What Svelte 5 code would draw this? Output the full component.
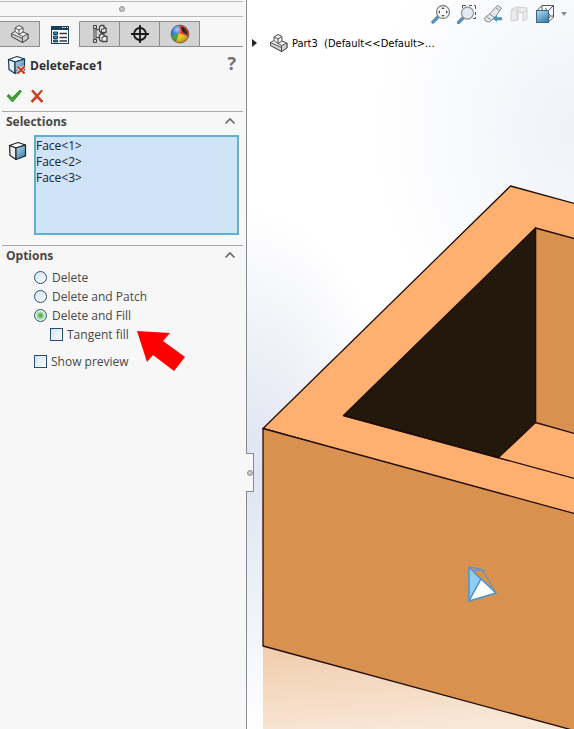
<script lang="ts">
let mode = $state("fill");
let tangentFill = $state(false);
let showPreview = $state(false);

const faces = ["Face<1>", "Face<2>", "Face<3>"];
const modes = [
	{ value: "delete", label: "Delete" },
	{ value: "patch", label: "Delete and Patch" },
	{ value: "fill", label: "Delete and Fill" },
];
</script>

{#snippet partIcon()}
    <svg width="20" height="20" viewBox="0 0 20 20" stroke="#505050" stroke-linejoin="round">
        <path d="M1.500 9.500 5 7.500V4l4-2.500L13 3.500V8l5 2v5l-5.500 3.500L1.500 12.500z" fill="#f4f4f4" />
        <path d="M1.500 9.500l11 5v4l-11-6zM12.500 12.500 18 10v5l-5.500 3.500z" fill="#cfcfcf" />
        <path d="M5 4l4 2 4-2.500M9 6v4.500l3.500 2M5 7.500l4 3L13 8" fill="none" />
    </svg>
{/snippet}

{#snippet chevron()}
    <svg width="12" height="8" viewBox="0 0 12 8">
        <path d="M1.500 6.500 6 2l4.500 4.500" fill="none" stroke="#686868" stroke-width="1.600" />
    </svg>
{/snippet}

{#snippet cube(stroke: string)}
    <svg width="20" height="20" viewBox="0 0 20 20" {stroke} stroke-width="1.200" stroke-linejoin="round">
        <defs>
            <linearGradient id="cube-face" x1="0" y1="0" x2=".6" y2="1">
                <stop offset="0" stop-color="#b5dcf2" />
                <stop offset="1" stop-color="#3e86b0" />
            </linearGradient>
        </defs>
        <path d="M1.500 4.500 10 1.500l7.500 2.500L8 7z" fill="#fff" />
        <path d="M1.500 4.500 8 7v11.500l-6-4z" fill="#e6ecf1" />
        <path d="M8 7l9.500-3v11L8 18.500z" fill="url(#cube-face)" />
        {#if stroke === "#173a50"}
            <path d="M10.500 11.500l7 7M17.500 11.500l-7 7" stroke="#fff" stroke-width="3.500" />
            <path d="M10.500 11.500l7 7M17.500 11.500l-7 7" stroke="#d33b22" stroke-width="2.400" />
        {/if}
    </svg>
{/snippet}

<main class="app">
    <aside class="panel">
        <div class="grip"><span class="dot"></span></div>

        <nav class="tabs">
            <button class="tab" aria-label="Feature tree">{@render partIcon()}</button>
            <button class="tab active" aria-label="Property manager">
                <svg width="20" height="20" viewBox="0 0 20 20">
                    <rect x="1.500" y="1.500" width="17" height="17" fill="#fff" stroke="#17405c" />
                    <path d="M1 1h18v4H1z" fill="#17405c" />
                    <path d="M12 2.500h1.500M14.500 2.500H16M17 2.500h1" stroke="#fff" />
                    <path d="M3.500 7h4v2.500h-4zM3.500 11h4v2.500h-4zM3.500 15h4v2h-4z" fill="#3a8cb8" stroke="#17405c" />
                    <path d="M9.500 8.500H17M9.500 12.500H17M9.500 16H17" stroke="#333" stroke-width="1.300" />
                </svg>
            </button>
            <button class="tab" aria-label="Configurations">
                <svg width="20" height="20" viewBox="0 0 20 20" fill="none" stroke="#444" stroke-linejoin="round">
                    <path d="M3.500 1.500h3v3h-3zM3.500 15.500h3v3h-3zM4 4.500v11M6 4.500v11M6 5.500h4M6 13.500h4" />
                    <path d="M9.500 3l1.500-1.500h3V4h2v4.500h-5L9.500 7zM9.500 11.500 11 10h3v2l3 .500v5h-5l-2.500-1.500z" fill="#f0f0f0" stroke-width="1.300" />
                    <path d="M11.500 8.500V5H14V4M12 17.500V13h2v-1" />
                </svg>
            </button>
            <button class="tab" aria-label="Dimensions">
                <svg width="20" height="20" viewBox="0 0 20 20" fill="none" stroke="#181818" stroke-width="1.800">
                    <circle cx="10" cy="10" r="6" />
                    <path d="M10 1v18M1 10h18" />
                </svg>
            </button>
            <button class="tab" aria-label="Display">
                <svg width="20" height="20" viewBox="0 0 20 20">
                    <defs>
                        <radialGradient id="gloss" cx=".35" cy=".25" r=".75">
                            <stop offset="0" stop-color="#fff" stop-opacity=".6" />
                            <stop offset=".4" stop-color="#fff" stop-opacity="0" />
                            <stop offset="1" stop-color="#000" stop-opacity=".3" />
                        </radialGradient>
                    </defs>
                    <circle cx="10" cy="10" r="9" fill="#e5392c" />
                    <path d="M9 9 1.200 12A9 9 0 0 1 8.500 1.100z" fill="#2d7be0" />
                    <path d="M9 9 6 18.100A9 9 0 0 1 1.200 12z" fill="#3aa63b" />
                    <path d="M9 9l9.500 4A9 9 0 0 1 6 18.100z" fill="#f3c91d" />
                    <path d="M10.500 2.500c4 0 7 4 7 8-3 0-7-4-7-8z" fill="#2a1718" />
                    <circle cx="10" cy="10" r="9" fill="url(#gloss)" stroke="#555" stroke-width=".6" />
                </svg>
            </button>
        </nav>

        <header class="title">
            {@render cube("#173a50")}
            <h1>DeleteFace1</h1>
            <button class="plain help" aria-label="Help">?</button>
        </header>

        <div class="confirm">
            <button class="plain" aria-label="OK">
                <svg width="16" height="16" viewBox="0 0 16 16">
                    <path d="M1 8l2-1.500 3 3.500 8-8 1.500 1.500L6.500 14z" fill="#3fa535" stroke="#24791f" stroke-width=".8" />
                </svg>
            </button>
            <button class="plain" aria-label="Cancel">
                <svg width="14" height="16" viewBox="0 0 14 16">
                    <path d="M1.500 3 3 2l4 4.500L11.500 2 12.500 3 8.300 8l4.700 5-1.500 1.500L7 9.800 2.500 14.500 1 13l4.700-5z" fill="#d83a20" stroke="#b32c14" stroke-width=".6" />
                </svg>
            </button>
        </div>

        <section>
            <h2>Selections <button class="plain" aria-label="Collapse selections">{@render chevron()}</button></h2>
            <div class="selection">
                {@render cube("#222")}
                <ul>
                    {#each faces as face}
                        <li>{face}</li>
                    {/each}
                </ul>
            </div>
        </section>

        <section>
            <h2>Options <button class="plain" aria-label="Collapse options">{@render chevron()}</button></h2>
            <div class="options">
                {#each modes as m}
                    <label>
                        <input type="radio" name="mode" value={m.value} bind:group={mode} />
                        {m.label}
                    </label>
                {/each}
                <label class="nested">
                    <input type="checkbox" bind:checked={tangentFill} />
                    Tangent fill
                </label>
                <label class="preview">
                    <input type="checkbox" bind:checked={showPreview} />
                    Show preview
                </label>
                <svg class="pointer" width="48" height="42" viewBox="0 0 48 42" aria-hidden="true">
                    <path d="M0 0l33 2-7 8 22 16-11 14-21-16-6 7z" fill="#fe0000" />
                </svg>
            </div>
        </section>

        <button class="splitter" aria-label="Hide panel"><span class="dot"></span></button>
    </aside>

    <div class="viewport">
        <svg class="scene" viewBox="0 0 327 729" preserveAspectRatio="xMinYMin slice" aria-hidden="true">
            <defs>
                <linearGradient id="reflection" x1="0" y1="0" x2=".3" y2="1">
                    <stop offset="0" stop-color="#f0ccab" />
                    <stop offset="1" stop-color="#f8e6d6" />
                </linearGradient>
            </defs>
            <path d="M16 646l311 84H16z" fill="url(#reflection)" />
            <g stroke="#210d08" stroke-width="1.300" stroke-linejoin="round">
                <path d="M16 428.500 263.500 186 340 207V520z" fill="#fdb06f" />
                <path d="M288.500 228 340 242V437l-51.500-14.500z" fill="#d99150" />
                <path d="M96.500 415.500 288.500 228v194.500l-37 35z" fill="#23180c" />
                <path d="M96.500 415.500 340 482" fill="none" />
                <path d="M16 428.500 340 517V734L16 646z" fill="#d99150" />
            </g>
            <g stroke="#4a94d6" stroke-linejoin="round">
                <path d="M222 567l13 2 14 24M226 570l12 1" fill="none" />
                <path d="M222 567l12 12-12 22z" fill="#90cdf5" stroke-width="1.500" />
                <path d="M234 579l15 14-27 8z" fill="#fff" stroke-width="1.500" />
            </g>
        </svg>

        <div class="toolbar">
            <button class="plain" aria-label="Zoom to fit">
                <svg width="20" height="20" viewBox="0 0 20 20">
                    <path d="M2 18l6-6" stroke="#5d92b3" stroke-width="3.500" stroke-linecap="round" />
                    <circle cx="12" cy="8" r="6.500" fill="#f7f9fa" stroke="#888" stroke-width="1.300" />
                    <path d="M12 3l1.800 2h-3.600zM12 13l1.800-2h-3.600zM7 8l2-1.800v3.600zM17 8l-2-1.800v3.600z" fill="#555" />
                </svg>
            </button>
            <button class="plain" aria-label="Zoom to area">
                <svg width="20" height="20" viewBox="0 0 20 20">
                    <path d="M5.500 4V1.500H9M12 1.500h3M17 1.500h1.500V5M18.500 8v3M18.500 13v1.500H16" fill="none" stroke="#555" />
                    <path d="M1.500 18.500l5-5" stroke="#5d92b3" stroke-width="3.500" stroke-linecap="round" />
                    <circle cx="10.500" cy="9" r="6" fill="#e3edf1" stroke="#999" stroke-width="1.300" />
                </svg>
            </button>
            <button class="plain" aria-label="Previous view">
                <svg width="20" height="20" viewBox="0 0 20 20">
                    <path d="M1.500 14l5-4 8-8.500 4 2.500-6 9-6 5-4-1z" fill="#e8e8e8" stroke="#888" />
                    <path d="M12.500 3.500l4 3M6.500 10l5 3.500M3.500 12.500l4.500 3.500" stroke="#888" />
                    <path d="M9.500 14.500 14 11v2.200h5v3h-5V18z" fill="#4f93b9" />
                </svg>
            </button>
            <button class="plain" aria-label="Section view">
                <svg width="20" height="20" viewBox="0 0 20 20" fill="#ebebeb" stroke="#d2d2d2">
                    <path d="M2 6l5-3 11 1v11l-4 2V9l-5-1v8l-7 1z" />
                    <path d="M2 6h6l6 3M8 6v11M9 3.500v3M14 9l4-3" fill="none" />
                </svg>
            </button>
            <button class="plain" aria-label="View orientation">
                <svg width="20" height="20" viewBox="0 0 20 20" fill="none" stroke="#555">
                    <path d="M1.500 7 7 1.500h11.500V13L13 18.500M7 1.500V7M18.500 1.500 13 7M11 4v3M13 12h5M15 10l-2 2 2 2" />
                    <rect x="1.500" y="6.500" width="12" height="12" fill="url(#cube-face)" stroke="#3a6680" />
                </svg>
            </button>
            <button class="plain caret" aria-label="More views"></button>
        </div>

        <div class="tree">
            <span class="expand"></span>
            {@render partIcon()}
            <span class="name">Part3  (Default&lt;&lt;Default&gt;...</span>
        </div>
    </div>
</main>

<style>
    :global(body) {
        margin: 0;
    }

    .app {
        display: flex;
        min-height: 100vh;
        font-family: "Open Sans", "Noto Sans", sans-serif;
        font-size: 12px;
        color: #484848;
    }

    svg {
        display: block;
        flex: none;
    }

    button {
        font: inherit;
        color: inherit;
        cursor: pointer;
    }

    .plain {
        padding: 0;
        border: none;
        background: none;
    }

    .panel {
        position: relative;
        box-sizing: border-box;
        flex: none;
        width: 247px;
        padding-top: 1px;
        background: #f7f7f7;
        border-right: 1px solid #868b90;
    }

    .grip {
        display: flex;
        align-items: center;
        justify-content: center;
        height: 14px;
        margin-right: 3px;
        border-top: 1px solid #b9b9b9;
        border-bottom: 1px solid #b9b9b9;
    }

    .dot {
        box-sizing: border-box;
        width: 6px;
        height: 6px;
        border: 1px solid #909090;
        border-radius: 50%;
        background: #c8c8c8;
    }

    .tabs {
        display: flex;
        height: 25px;
        margin: 4px 3px 0 0;
        border-bottom: 1px solid #8c8c8c;
    }

    .tab {
        display: flex;
        align-items: center;
        justify-content: center;
        box-sizing: border-box;
        width: 40px;
        padding: 0;
        border: solid #8c8c8c;
        border-width: 1px 1px 0 0;
        background: #d3d3d3;
    }

    .tab.active {
        height: 26px;
        background: #f7f7f7;
        border-top-color: #f7f7f7;
    }

    .title {
        display: flex;
        align-items: center;
        gap: 3px;
        height: 36px;
        padding: 0 10px 0 7px;
    }

    h1 {
        flex: 1;
        margin: 0;
        font-size: 12px;
        font-weight: 700;
        color: #303030;
    }

    .help {
        font-size: 18px;
        font-weight: 700;
        line-height: 24px;
        padding-bottom: 4px;
        color: #707070;
    }

    .confirm {
        display: flex;
        align-items: center;
        gap: 8px;
        height: 25px;
        padding: 0 6px 3px;
    }

    section {
        margin: 0 3px 0 2px;
        border-top: 1px solid #a8a8a8;
    }

    h2 {
        display: flex;
        align-items: center;
        justify-content: space-between;
        height: 18px;
        margin: 0;
        padding: 0 7px 0 4px;
        font-size: 12px;
        font-weight: 700;
        color: #484848;
    }

    .selection {
        display: flex;
        gap: 6px;
        padding: 5px 4px 10px 6px;
    }

    .selection :global(svg) {
        margin-top: 6px;
    }

    ul {
        box-sizing: border-box;
        flex: 1;
        height: 100px;
        margin: 0;
        padding: 1px 0;
        list-style: none;
        border: 2px solid #62aece;
        background: #cfe4f7;
        color: #202020;
        line-height: 16px;
    }

    .options {
        position: relative;
        padding: 4px 0 0 32px;
    }

    label {
        display: flex;
        align-items: center;
        gap: 5px;
        height: 19px;
    }

    .nested {
        margin-left: 16px;
        gap: 4px;
    }

    .preview {
        margin-top: 8px;
        gap: 4px;
    }

    input {
        appearance: none;
        box-sizing: border-box;
        flex: none;
        width: 13px;
        height: 13px;
        margin: 0;
        border: 1px solid #254f78;
        background: linear-gradient(135deg, #d4e2ee, #fbfcfd);
    }

    input[type="radio"] {
        border-radius: 50%;
    }

    input[type="radio"]:checked {
        background: radial-gradient(circle, #5aae5a 0 1px, #9ed59e 3px, #e9f3ea 5px);
    }

    input[type="checkbox"]:checked {
        background: #4aa84a;
    }

    .pointer {
        position: absolute;
        top: 67px;
        left: 135px;
    }

    .splitter {
        position: absolute;
        z-index: 1;
        top: 453px;
        left: 100%;
        display: flex;
        align-items: center;
        justify-content: center;
        box-sizing: border-box;
        width: 8px;
        height: 39px;
        padding: 0;
        border: 1px solid #868b90;
        border-left: none;
        background: #f7f7f7;
    }

    .viewport {
        position: relative;
        flex: 1;
        overflow: hidden;
        background:
            radial-gradient(ellipse 150px 260px at 0 470px, #dfe3f0, transparent),
            radial-gradient(ellipse 200px 240px at 100% 130px, #eff2f9, transparent),
            #fff;
    }

    /* the model sits behind the toolbar and the tree */
    .scene {
        position: absolute;
        inset: 0;
        width: 100%;
        height: 100%;
    }

    .toolbar,
    .tree {
        position: relative;
        display: flex;
        align-items: center;
    }

    .toolbar {
        justify-content: flex-end;
        gap: 6px;
        height: 28px;
        padding-right: 7px;
    }

    .caret {
        width: 6px;
        border: solid transparent;
        border-width: 4px 3px 0;
        border-top-color: #8c8c8c;
    }

    .tree {
        height: 30px;
        padding-left: 5px;
        color: #000;
    }

    .expand {
        margin-right: 12px;
        border: solid transparent;
        border-width: 4px 0 4px 5px;
        border-left-color: #222;
    }

    .name {
        margin-left: 3px;
        font-family: "DejaVu Sans Condensed", "DejaVu Sans", sans-serif;
        font-size: 11px;
        white-space: pre;
    }
</style>
